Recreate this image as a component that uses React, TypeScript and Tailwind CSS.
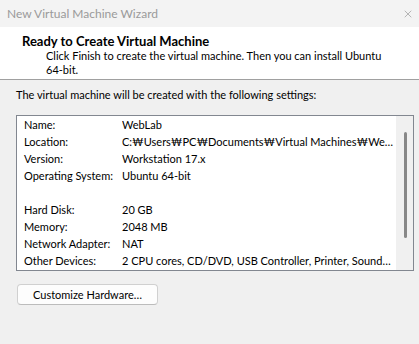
import { X } from "lucide-react";

const rows: [string, string][] = [
	["Name:", "WebLab"],
	["Location:", "C:₩Users₩PC₩Documents₩Virtual Machines₩We…"],
	["Version:", "Workstation 17.x"],
	["Operating System:", "Ubuntu 64-bit"],
	["", ""],
	["Hard Disk:", "20 GB"],
	["Memory:", "2048 MB"],
	["Network Adapter:", "NAT"],
	["Other Devices:", "2 CPU cores, CD/DVD, USB Controller, Printer, Sound…"],
];

function App() {
	return (
		<div className="w-[419px] h-[344px] bg-[#f0f0f0] text-[11px] text-black overflow-hidden font-['Lato','Noto_Sans',sans-serif]">
			{/* title bar */}
			<div className="h-[27px] bg-[#f3f3f3] flex items-center justify-between pl-[7px] pr-[5px]">
				<span className="text-[12px] text-[#9a9a9a] leading-[15px]">New Virtual Machine Wizard</span>
				<X size={12} strokeWidth={1.2} className="text-[#8a8a8a]" />
			</div>

			{/* header */}
			<div className="h-[53px] bg-white border-b border-[#a0a0a0] pt-[6px]">
				<div className="pl-[22px] text-[13px] font-bold leading-[16px]">Ready to Create Virtual Machine</div>
				<div className="pl-[46px] leading-[14px]">
					Click Finish to create the virtual machine. Then you can install Ubuntu
					<br />
					64-bit.
				</div>
			</div>

			{/* body */}
			<div className="pt-[7px] pl-[16px] pr-[5px]">
				<p className="leading-[15px]">The virtual machine will be created with the following settings:</p>

				<div className="mt-[13px] h-[156px] border border-[#828790] bg-white flex">
					<div className="flex-1 pl-[7px] overflow-hidden">
						{rows.map(([label, value], i) => (
							<div key={i} className="h-[17px] leading-[17px] flex whitespace-nowrap">
								<span className="w-[98px] shrink-0">{label}</span>
								<span className="overflow-hidden">{value}</span>
							</div>
						))}
					</div>
					<div className="w-[17px] bg-[#f0f0f0] flex justify-center pt-[16px]">
						<div className="w-[3px] h-[106px] rounded-full bg-[#878787] ml-[1px]" />
					</div>
				</div>

				<button className="mt-[13px] ml-[1px] w-[141px] h-[21px] rounded-[4px] border border-[#d0d0d0] border-b-[#bcbcbc] bg-[#fdfdfd] leading-[19px]">
					Customize Hardware…
				</button>
			</div>
		</div>
	);
}

export default App;
